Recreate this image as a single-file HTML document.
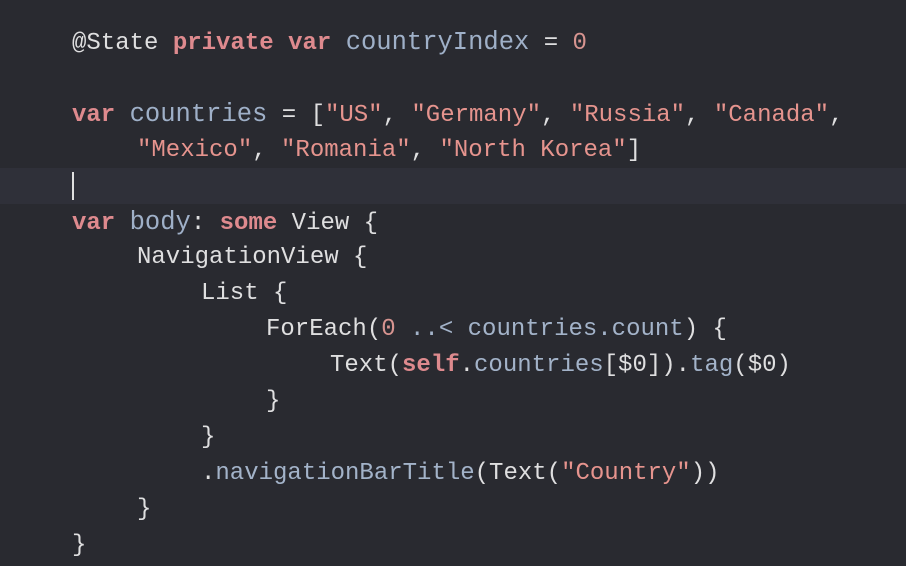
<!DOCTYPE html>
<html><head><style>
html,body{margin:0;padding:0;background:#292a30;width:906px;height:566px;overflow:hidden}
.c{position:absolute;top:25px;left:0;width:906px;font-family:"Liberation Mono",monospace;font-size:24px;color:#dfdfe0}
.l{height:36px;line-height:36px;padding-left:72px;white-space:pre}
.cur{background:#2f3039;position:relative;margin-top:-1px;height:36px}
.cur::before{content:"";position:absolute;left:72px;top:4px;width:2px;height:28px;background:#e0e0e0}
.k{color:#de8a8e;font-weight:bold}
.s{color:#e6948e}
.n{color:#d79490}
.v{color:#9fb0c8;font-size:25.5px}
.m{color:#a3b3c9}
</style></head><body><div class="c">
<div class="l">@State <span class="k">private</span> <span class="k">var</span> <span class="v">countryIndex</span> = <span class="n">0</span></div>
<div class="l"></div>
<div class="l"><span class="k">var</span> <span class="v">countries</span> = [<span class="s">"US"</span>, <span class="s">"Germany"</span>, <span class="s">"Russia"</span>, <span class="s">"Canada"</span>,</div>
<div class="l" style="padding-left:137px"><span class="s">"Mexico"</span>, <span class="s">"Romania"</span>, <span class="s">"North Korea"</span>]</div>
<div class="l cur"></div>
<div class="l" style="margin-top:1px;height:35px"><span class="k">var</span> <span class="v">body</span>: <span class="k">some</span> View {</div>
<div class="l" style="padding-left:137px">NavigationView {</div>
<div class="l" style="padding-left:201px">List {</div>
<div class="l" style="padding-left:266px">ForEach(<span class="n">0</span> <span class="m">..&lt;</span> <span class="m">countries.count</span>) {</div>
<div class="l" style="padding-left:330px">Text(<span class="k">self</span>.<span class="m">countries</span>[$0]).<span class="m">tag</span>($0)</div>
<div class="l" style="padding-left:266px">}</div>
<div class="l" style="padding-left:201px">}</div>
<div class="l" style="padding-left:201px">.<span class="m">navigationBarTitle</span>(Text(<span class="s">"Country"</span>))</div>
<div class="l" style="padding-left:137px">}</div>
<div class="l">}</div>
</div></body></html>
